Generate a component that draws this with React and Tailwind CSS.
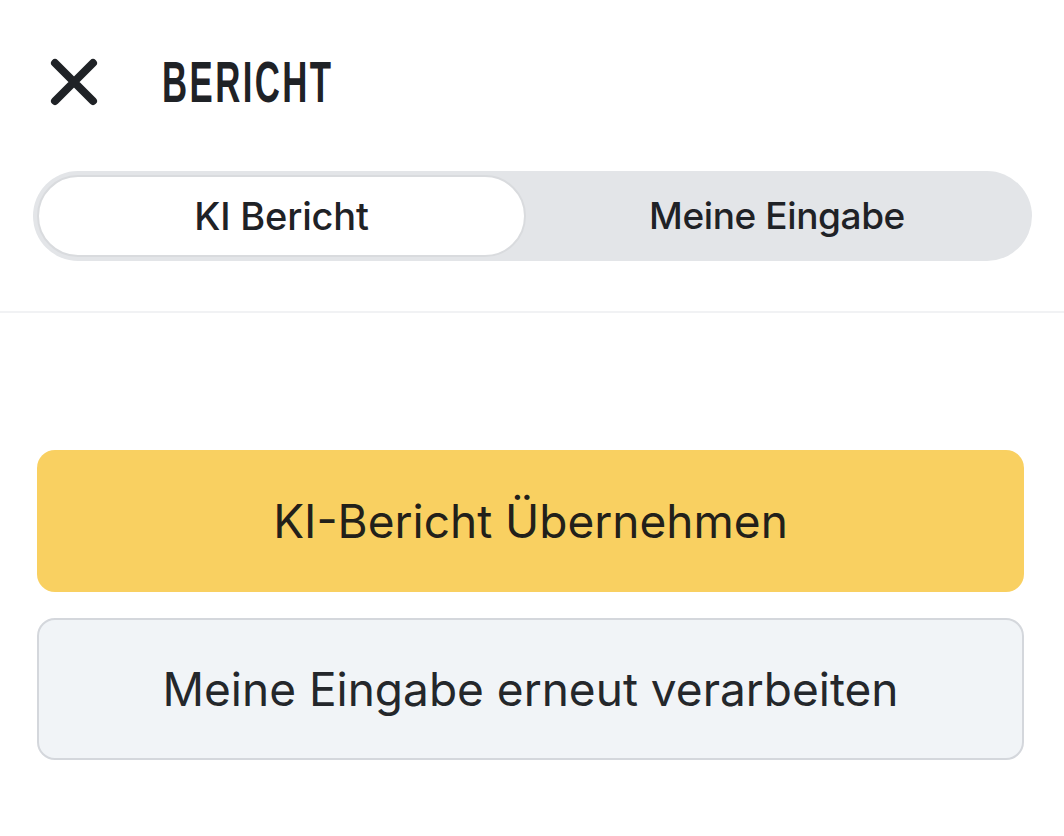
import React from "react";

export default function App() {
  return (
    <div className="w-[1064px] h-[836px] bg-white overflow-hidden" style={{ fontFamily: "Inter, 'Liberation Sans', sans-serif" }}>
      {/* header */}
      <div className="h-[171px] flex items-center pl-[50px] pb-[7px] gap-[64px]">
        <svg width="48" height="48" viewBox="0 0 48 48" className="shrink-0">
          <path d="M5 5 L43 43 M43 5 L5 43" stroke="#1f2226" strokeWidth="8" strokeLinecap="round" />
        </svg>
        <span
          className="inline-block origin-left scale-x-[0.6] font-bold text-[58px] leading-none tracking-[4px] text-[#1f2226]"
          style={{ fontFamily: "'Liberation Sans Narrow', 'Liberation Sans', sans-serif" }}
        >
          BERICHT
        </span>
      </div>

      {/* segmented control */}
      <div className="ml-[33px] mr-[32px] h-[90px] rounded-full bg-[#e3e5e8] p-[4px] flex">
        <div className="w-[489px] h-full rounded-full bg-white border-2 border-[#d9dbde] flex items-center justify-center text-[38px] font-medium text-[#1f2226] tracking-[-0.2px]">
          KI Bericht
        </div>
        <div className="flex-1 flex items-center justify-center text-[37px] font-medium text-[#1f2226] tracking-[-0.4px]">
          Meine Eingabe
        </div>
      </div>

      <div className="mt-[50px] h-[2px] bg-[#f1f2f4]" />

      {/* buttons */}
      <div className="mt-[137px] ml-[37px] mr-[40px] flex flex-col gap-[26px]">
        <div className="h-[142px] rounded-[18px] bg-[#f9d061] flex items-center justify-center text-[46px] text-[#22201a]">
          KI-Bericht Übernehmen
        </div>
        <div className="h-[142px] rounded-[18px] bg-[#f1f4f7] border-2 border-[#d4d7dc] flex items-center justify-center text-[46px] text-[#24272b]">
          Meine Eingabe erneut verarbeiten
        </div>
      </div>
    </div>
  );
}
